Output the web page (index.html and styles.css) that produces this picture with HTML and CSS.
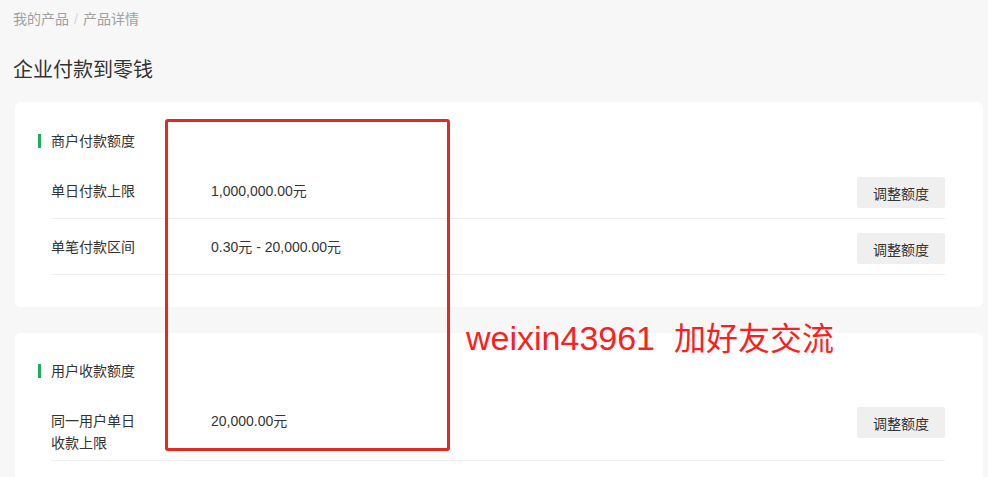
FILE: index.html
```html
<!DOCTYPE html>
<html lang="zh-CN">
<head>
<meta charset="utf-8">
<title>企业付款到零钱</title>
<link rel="stylesheet" href="styles.css">
</head>
<body>
<div class="page">
  <div class="crumb"><span>我的产品</span><span class="sep">/</span><span>产品详情</span></div>
  <h1 class="title">企业付款到零钱</h1>

  <section class="card">
    <div class="sec-title">商户付款额度</div>
    <div class="row">
      <div class="label">单日付款上限</div>
      <div class="value">1,000,000.00元</div>
      <button class="btn">调整额度</button>
    </div>
    <div class="row">
      <div class="label">单笔付款区间</div>
      <div class="value">0.30元 - 20,000.00元</div>
      <button class="btn">调整额度</button>
    </div>
  </section>

  <section class="card">
    <div class="sec-title">用户收款额度</div>
    <div class="row">
      <div class="label">同一用户单日收款上限</div>
      <div class="value">20,000.00元</div>
      <button class="btn">调整额度</button>
    </div>
  </section>
</div>

<div class="mark-box"></div>
<div class="mark-text">weixin43961&nbsp;&nbsp;<span class="mark-cjk">加好友交流</span></div>
</body>
</html>
```

FILE: styles.css
```css
html, body {
  margin: 0;
  padding: 0;
  background: #f7f7f8;
  font-family: "Liberation Sans", "Noto Sans CJK SC", sans-serif;
  color: #333;
  overflow: hidden;
}

.page {
  padding: 9px 5px 0 15px;
}

.crumb {
  font-size: 14px;
  line-height: 20px;
  color: #a0a0a0;
  margin-left: -2px;
}

.crumb .sep {
  color: #d6d6d6;
  margin: 0 5px;
}

.title {
  margin: 27px 0 18px -2px;
  font-size: 20px;
  line-height: 28px;
  font-weight: normal;
  color: #333;
}

.card {
  background: #fff;
  border-radius: 6px;
  padding: 29px 38px 32px 23px;
  margin-bottom: 26px;
}

.card + .card {
  padding-top: 28px;
}

.sec-title {
  display: flex;
  align-items: center;
  font-size: 14px;
  line-height: 20px;
  color: #333;
  margin-bottom: 12px;
}

.sec-title::before {
  content: "";
  width: 3px;
  height: 14px;
  background: #1aad5c;
  margin-right: 10px;
}

.row {
  box-sizing: border-box;
  min-height: 56px;
  display: flex;
  align-items: flex-start;
  margin-left: 13px;
  padding: 14px 0 6px;
  border-bottom: 1px solid #eeeeee;
}

.label {
  width: 88px;
  margin-right: 72px;
  font-size: 14px;
  line-height: 22px;
  margin-top: 3px;
}

.value {
  flex: 1;
  font-size: 14px;
  line-height: 22px;
  margin-top: 3px;
  color: #353535;
}

.btn {
  height: 31px;
  padding: 0 16px;
  border: none;
  border-radius: 2px;
  background: #efefef;
  color: #333;
  font-family: "Noto Sans CJK SC", sans-serif;
  font-size: 14px;
  cursor: pointer;
}

.mark-box {
  position: absolute;
  left: 165px;
  top: 119px;
  width: 279px;
  height: 326px;
  border: 3px solid #e02a22;
  border-radius: 3px;
}

.mark-text {
  position: absolute;
  left: 466px;
  top: 320px;
  font-family: "Liberation Sans", "Noto Sans CJK SC", sans-serif;
  font-size: 34px;
  line-height: 36px;
  color: #ff1e1e;
  white-space: nowrap;
}

.mark-cjk {
  font-size: 32px;
}
```
